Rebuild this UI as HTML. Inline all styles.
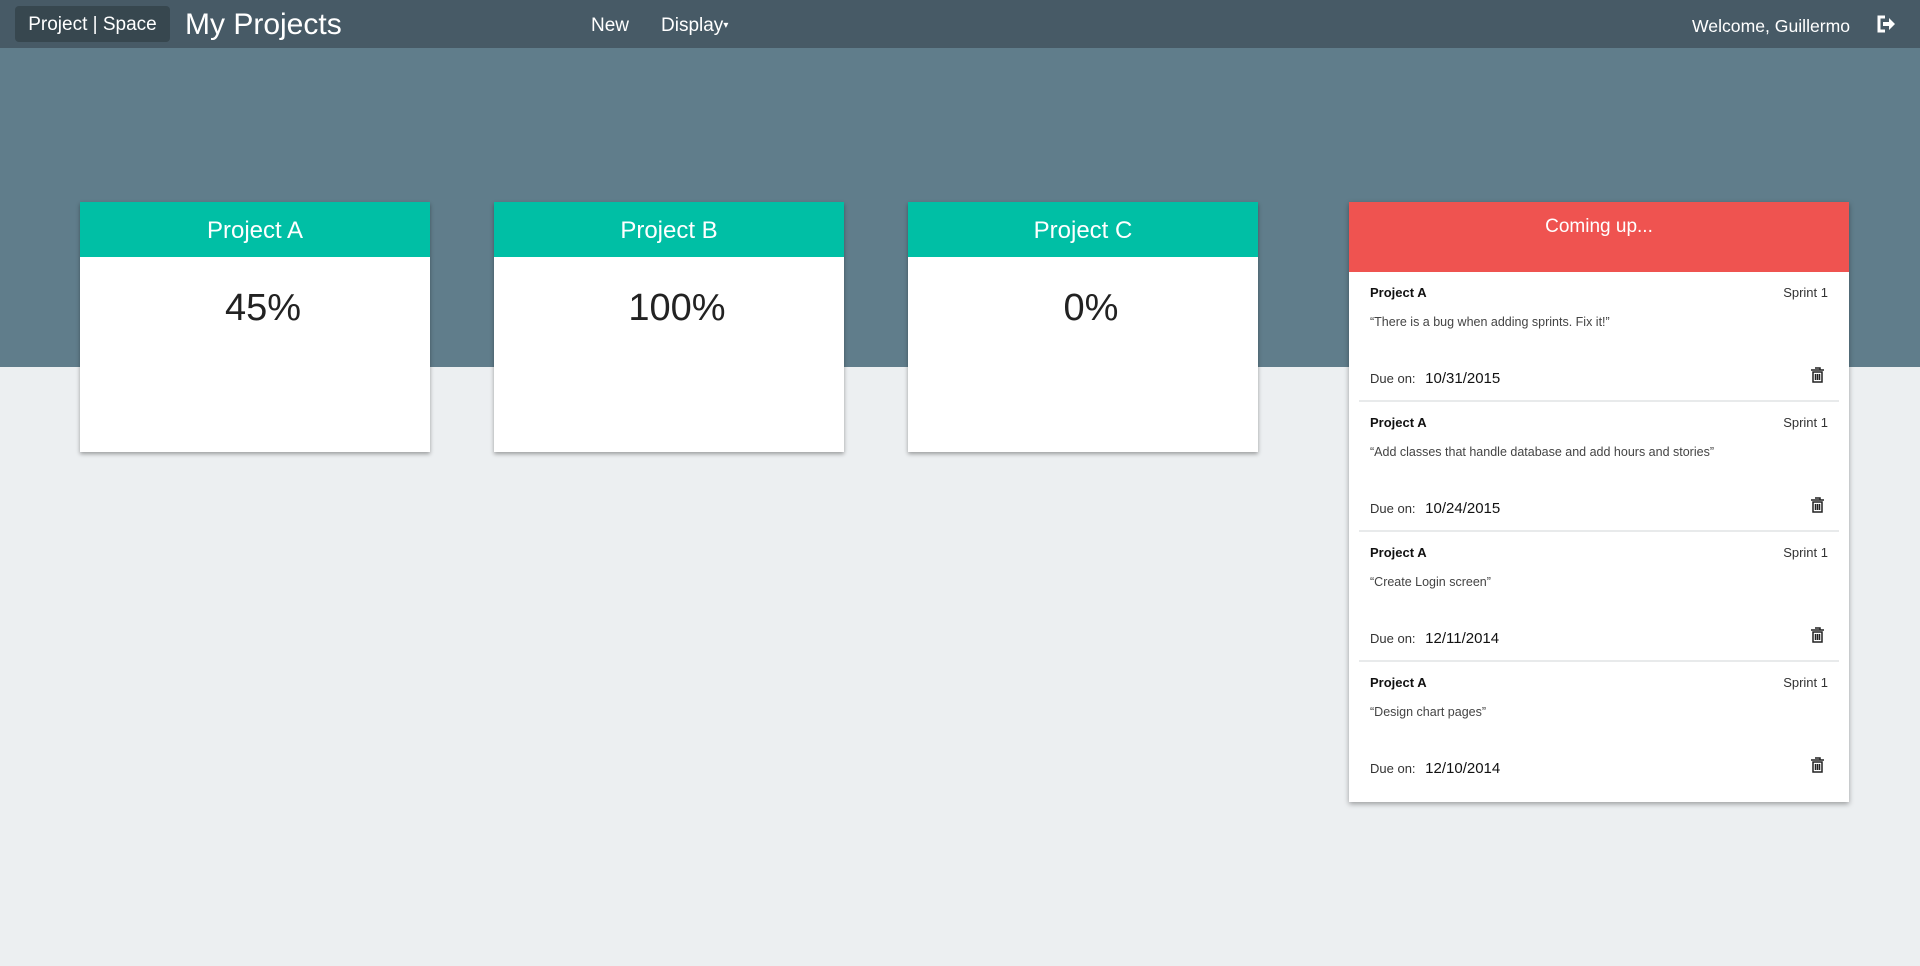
<!DOCTYPE html>
<html><head><meta charset="utf-8"><style>
*{box-sizing:border-box;margin:0;padding:0}
body{width:1920px;height:966px;overflow:hidden;background:#eceff1;font-family:"Liberation Sans",sans-serif;position:relative}
.nav{position:absolute;left:0;top:0;width:1920px;height:48px;background:#475a66;color:#fff}
.hero{position:absolute;left:0;top:48px;width:1920px;height:319px;background:#607d8b}
.brand{position:absolute;left:15px;top:6px;width:155px;height:36px;background:#37474f;border-radius:4px;font-size:19px;line-height:38px;text-align:center}
.title{position:absolute;left:185px;top:7px;font-size:30px;line-height:36px}
.nl{position:absolute;top:14px;font-size:19px;line-height:24px}
.card{position:absolute;top:202px;width:350px;height:250px;background:#fff;box-shadow:0 2px 4px rgba(0,0,0,.35)}
.card .h{height:55px;background:#00bfa5;color:#fff;font-size:24px;line-height:57px;text-align:center;font-weight:300}
.card .p{font-size:38px;text-align:center;margin-top:30px;padding-left:16px;color:#222;font-weight:300}
.up{position:absolute;left:1349px;top:202px;width:500px;height:600px;background:#fff;box-shadow:0 2px 5px rgba(0,0,0,.35)}
.up .h{height:70px;background:#ef5350;color:#fff;font-size:19px;text-align:center;padding-top:14px}
.it{position:relative;height:130px;margin:0 10px;border-bottom:2px solid #e8eaeb}
.it:last-child{border-bottom:none}
.it .n{position:absolute;left:11px;top:13px;font-size:13px;font-weight:bold;color:#111}
.it .s{position:absolute;right:11px;top:13px;font-size:13px;color:#333}
.it .q{position:absolute;left:11px;top:43px;font-size:12.5px;color:#444}
.it .d{position:absolute;left:11px;top:98px;font-size:13px;color:#333}
.it .d b{font-weight:normal;font-size:15px;color:#111;margin-left:6px}
.it svg{position:absolute;right:15px;top:95px}
</style></head><body>
<div class="hero"></div>
<div class="nav">
<div class="brand">Project | Space</div>
<div class="title">My Projects</div>
<div class="nl" style="left:591px">New</div>
<div class="nl" style="left:661px">Display<span style="font-size:10px;vertical-align:middle">▾</span></div>
<div class="nl" style="left:1692px;font-size:17.6px">Welcome, Guillermo</div>
<svg style="position:absolute;left:1876px;top:15px" width="20" height="18" viewBox="0 0 20 18"><path d="M9 2H3v14h6" fill="none" stroke="#fff" stroke-width="3"/><path d="M7 7h6V3l6 6-6 6v-4H7z" fill="#fff"/></svg>
</div>
<div class="card" style="left:80px"><div class="h">Project A</div><div class="p">45%</div></div>
<div class="card" style="left:494px"><div class="h">Project B</div><div class="p">100%</div></div>
<div class="card" style="left:908px"><div class="h">Project C</div><div class="p">0%</div></div>
<div class="up"><div class="h">Coming up...</div>
<div class="it"><div class="n">Project A</div><div class="s">Sprint 1</div><div class="q">“There is a bug when adding sprints. Fix it!”</div><div class="d">Due on: <b>10/31/2015</b></div><svg width="13" height="16" viewBox="0 0 13 16"><path d="M4 1h5v2M0 3h13M2 5h9v10H2z M4.5 7v6M6.5 7v6M8.5 7v6" fill="none" stroke="#222" stroke-width="1.5"/></svg></div>
<div class="it"><div class="n">Project A</div><div class="s">Sprint 1</div><div class="q">“Add classes that handle database and add hours and stories”</div><div class="d">Due on: <b>10/24/2015</b></div><svg width="13" height="16" viewBox="0 0 13 16"><path d="M4 1h5v2M0 3h13M2 5h9v10H2z M4.5 7v6M6.5 7v6M8.5 7v6" fill="none" stroke="#222" stroke-width="1.5"/></svg></div>
<div class="it"><div class="n">Project A</div><div class="s">Sprint 1</div><div class="q">“Create Login screen”</div><div class="d">Due on: <b>12/11/2014</b></div><svg width="13" height="16" viewBox="0 0 13 16"><path d="M4 1h5v2M0 3h13M2 5h9v10H2z M4.5 7v6M6.5 7v6M8.5 7v6" fill="none" stroke="#222" stroke-width="1.5"/></svg></div>
<div class="it"><div class="n">Project A</div><div class="s">Sprint 1</div><div class="q">“Design chart pages”</div><div class="d">Due on: <b>12/10/2014</b></div><svg width="13" height="16" viewBox="0 0 13 16"><path d="M4 1h5v2M0 3h13M2 5h9v10H2z M4.5 7v6M6.5 7v6M8.5 7v6" fill="none" stroke="#222" stroke-width="1.5"/></svg></div>
</div>
</body></html>
